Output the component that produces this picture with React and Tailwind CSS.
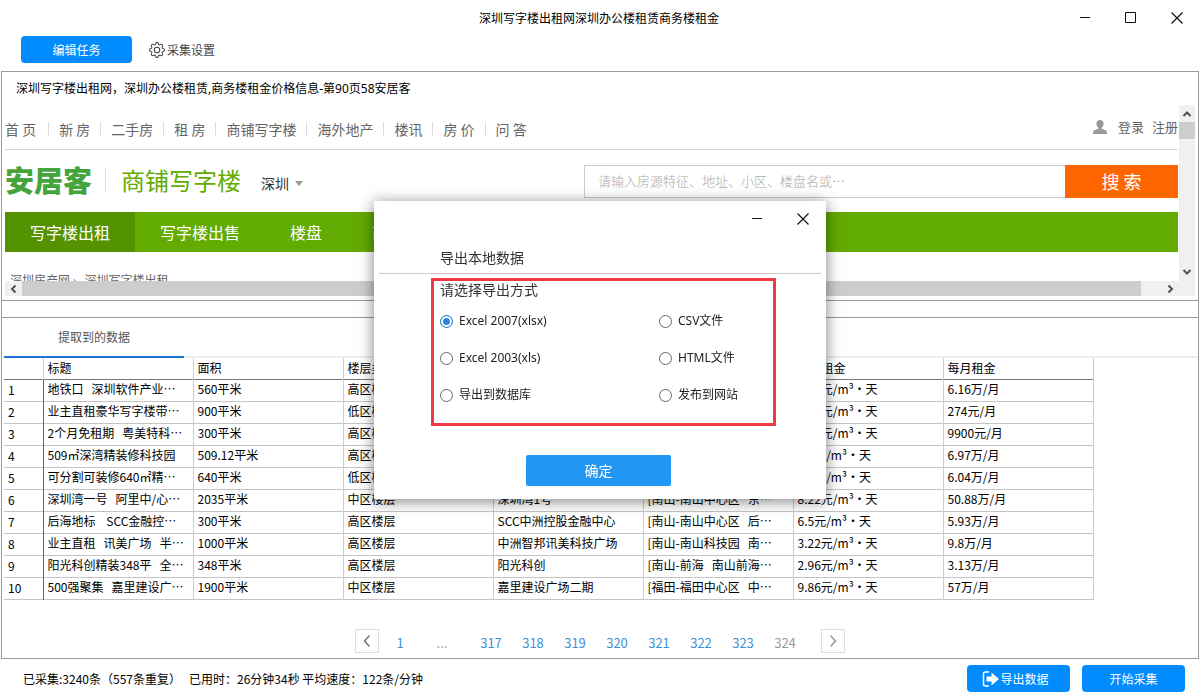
import { useState } from "react";
import { BsGear } from "react-icons/bs";

const siteLinks = ["首 页", "新 房", "二手房", "租 房", "商铺写字楼", "海外地产", "楼讯", "房 价", "问 答"];

const channels = ["写字楼出租", "写字楼出售", "楼盘", "商铺"];

const columns = ["标题", "面积", "楼层类型", "楼盘", "地址", "每日租金", "每月租金"];

const rows = [
  ["地铁口   深圳软件产业…", "560平米", "高区楼层", "", "", "6.12元/m³·天", "6.16万/月"],
  ["业主直租豪华写字楼带…", "900平米", "低区楼层", "", "", "5.25元/m³·天", "274元/月"],
  ["2个月免租期   粤美特科…", "300平米", "高区楼层", "", "", "6.33元/m³·天", "9900元/月"],
  ["509㎡深湾精装修科技园", "509.12平米", "高区楼层", "", "", "6.5元/m³·天", "6.97万/月"],
  ["可分割可装修640㎡精…", "640平米", "低区楼层", "", "", "6.2元/m³·天", "6.04万/月"],
  ["深圳湾一号   阿里中/心…", "2035平米", "中区楼层", "深圳湾1号", "[南山-南山中心区   东…", "8.22元/m³·天", "50.88万/月"],
  ["后海地标    SCC金融控…", "300平米", "高区楼层", "SCC中洲控股金融中心", "[南山-南山中心区   后…", "6.5元/m³·天", "5.93万/月"],
  ["业主直租   讯美广场   半…", "1000平米", "高区楼层", "中洲智邦讯美科技广场", "[南山-南山科技园   南…", "3.22元/m³·天", "9.8万/月"],
  ["阳光科创精装348平   全…", "348平米", "高区楼层", "阳光科创", "[南山-前海   南山前海…", "2.96元/m³·天", "3.13万/月"],
  ["500强聚集   嘉里建设广…", "1900平米", "中区楼层", "嘉里建设广场二期", "[福田-福田中心区   中…", "9.86元/m³·天", "57万/月"],
];

const pages = [317, 318, 319, 320, 321, 322, 323];

const formats = [
  { id: "xlsx", label: "Excel 2007(xlsx)" },
  { id: "csv", label: "CSV文件" },
  { id: "xls", label: "Excel 2003(xls)" },
  { id: "html", label: "HTML文件" },
  { id: "db", label: "导出到数据库" },
  { id: "site", label: "发布到网站" },
];

const MinimizeIcon = () => (
  <svg width="12" height="12" viewBox="0 0 12 12" stroke="#111" fill="none">
    <path d="M1 5.5h10" />
  </svg>
);

const MaximizeIcon = () => (
  <svg width="12" height="12" viewBox="0 0 12 12" stroke="#111" fill="none">
    <path d="M.5.5h10v10H.5z" />
  </svg>
);

const CloseIcon = () => (
  <svg width="12" height="12" viewBox="0 0 12 12" stroke="#111" strokeWidth="1.2" fill="none">
    <path d="M.5.5l11 11M11.5.5l-11 11" />
  </svg>
);

const Chevron = ({ d, color = "#505050", size = 10, stroke = 2 }) => (
  <svg width={size} height={size} viewBox="0 0 10 10" stroke={color} strokeWidth={stroke} fill="none">
    <path d={d} />
  </svg>
);

const TitleBar = () => (
  <header className="grid h-9 grid-cols-[1fr_auto_1fr] items-center pr-[17px] pl-[15px]">
    <span />
    <h1>深圳写字楼出租网深圳办公楼租赁商务楼租金</h1>
    <div className="flex justify-end gap-[34px]">
      <button type="button" aria-label="最小化"><MinimizeIcon /></button>
      <button type="button" aria-label="最大化"><MaximizeIcon /></button>
      <button type="button" aria-label="关闭"><CloseIcon /></button>
    </div>
  </header>
);

const SiteHeader = () => (
  <>
    <div className="flex h-[45px] items-center justify-between border-b border-[#d4d4d4] pt-1 text-sm text-[#666]">
      <nav className="flex">
        {siteLinks.map((link, i) => (
          <a
            key={link}
            href="#"
            className={i === 0 ? "pr-3 leading-[14px]" : "border-l border-[#ddd] px-2.5 leading-[14px]"}
          >
            {link}
          </a>
        ))}
      </nav>
      <div className="flex items-center gap-2 pb-1 text-[13px]">
        <svg width="16" height="14" viewBox="0 0 16 14" fill="#999" className="mr-0.5">
          <path d="M8 0c2.3 0 3.6 1.500 3.600 3.700 0 1.700-.8 3.200-1.900 3.900v1.200c1.800.8 5.300 1.400 5.300 3.300V14H1v-1.900c0-1.900 3.500-2.500 5.300-3.300V7.600C5.200 6.900 4.400 5.400 4.400 3.700 4.400 1.500 5.700 0 8 0z" />
        </svg>
        <a href="#">登录</a>
        <a href="#">注册</a>
      </div>
    </div>
    <div className="flex h-[62px] items-center">
      <span className="pb-1 text-[29px] leading-8 font-black text-[#45a53c]">安居客</span>
      <span className="ml-[13px] h-6 border-l border-[#ddd]" />
      <span className="ml-[15px] pb-0.5 text-2xl leading-8 text-[#62ab00]">商铺写字楼</span>
      <button type="button" className="ml-5 flex items-center gap-1.5 pt-1 text-sm text-[#333]">
        深圳
        <svg width="8" height="5" viewBox="0 0 8 5" fill="#999"><path d="M0 0h8L4 5z" /></svg>
      </button>
      <form className="ml-auto flex h-[33px] w-[594px]">
        <input
          type="text"
          aria-label="搜索房源"
          placeholder="请输入房源特征、地址、小区、楼盘名或…"
          className="min-w-0 flex-1 border border-r-0 border-[#ccc] px-[13px] text-[13px] font-light outline-none placeholder:text-[#aaa]"
        />
        <button type="button" className="w-[113px] bg-[#ff6600] text-lg text-white">搜 索</button>
      </form>
    </div>
    <nav className="flex h-10 bg-[#62ab00] text-base text-white">
      {channels.map((name, i) => (
        <a
          key={name}
          href="#"
          className={i === 0 ? "bg-[#549300] px-[25px] leading-10" : "px-[25px] leading-10"}
        >
          {name}
        </a>
      ))}
    </nav>
    <p className="px-[5px] pt-5 text-[#666]">深圳房产网 › &nbsp; 深圳写字楼出租</p>
  </>
);

const BrowserView = () => (
  <section className="border-b border-[#999] pr-[3px] pb-1 pl-[3px]">
    <p className="h-[33px] pl-[11px] font-['Noto_Sans','Noto_Sans_CJK_SC',sans-serif] leading-[34px]">
      深圳写字楼出租网，深圳办公楼租赁,商务楼租金价格信息-第90页58安居客
    </p>
    <div className="flex">
      <div className="h-44 min-w-0 flex-1 overflow-hidden pr-px">
        <SiteHeader />
      </div>
      <div className="flex w-4 flex-col items-center bg-[#f0f0f0]">
        <span className="flex h-[17px] items-center"><Chevron d="M1.500 7L5 3.500 8.500 7" /></span>
        <span className="h-[17px] w-full bg-[#cdcdcd]" />
        <span className="mt-auto flex h-[18px] items-center"><Chevron d="M1.500 3L5 6.500 8.500 3" /></span>
      </div>
    </div>
    <div className="flex h-[15px] items-center bg-[#f0f0f0] pr-5">
      <span className="flex w-[17px] justify-center"><Chevron d="M6.500 1.500L3 5l3.500 3.500" /></span>
      <span className="mr-6 h-full flex-1 bg-[#cdcdcd]" />
      <Chevron d="M3.500 1.500L7 5 3.500 8.500" />
    </div>
  </section>
);

const DataTable = () => (
  <table className="w-[1089px] table-fixed border-collapse text-left text-black">
    <colgroup>
      <col className="w-[39px]" />
      {columns.map((name) => <col key={name} className="w-[150px]" />)}
    </colgroup>
    <thead>
      <tr className="h-[21px] border-b border-[#777]">
        <th className="border-r border-[#ccc]" />
        {columns.map((name) => (
          <th key={name} className="border-r border-[#ccc] px-1 font-normal">{name}</th>
        ))}
      </tr>
    </thead>
    <tbody>
      {rows.map((row, i) => (
        <tr key={i} className="h-[22px] border-b border-[#c4c4c4]">
          <th className="border-r border-[#666] px-1 font-normal">{i + 1}</th>
          {row.map((cell, j) => (
            <td key={j} className="overflow-hidden border-r border-[#ccc] px-1 pb-0.5 whitespace-pre">{cell}</td>
          ))}
        </tr>
      ))}
    </tbody>
  </table>
);

const Pagination = () => (
  <nav className="mt-auto mr-0.5 mb-[5px] flex items-center justify-center text-[13px] text-[#3d8fd8]">
    <button type="button" aria-label="上一页" className="flex size-6 items-center justify-center border border-[#ddd]">
      <Chevron d="M7 0.500L3 5l4 4.500" color="#777" size={12} stroke={1.3} />
    </button>
    <a href="#" className="w-[42px] pt-1 text-center">1</a>
    <span className="mr-[7px] w-[42px] pt-1 text-center text-[#999]">...</span>
    {pages.map((page) => (
      <a key={page} href="#" className="w-[42px] pt-1 text-center">{page}</a>
    ))}
    <span className="mr-[15px] w-[42px] pt-1 text-center text-[#999]">324</span>
    <button type="button" aria-label="下一页" className="flex size-6 items-center justify-center border border-[#ddd]">
      <Chevron d="M3 0.500L7 5l-4 4.500" color="#999" size={12} stroke={1.3} />
    </button>
  </nav>
);

const ExportDialog = () => {
  const [format, setFormat] = useState("xlsx");

  return (
    <div className="fixed inset-0 flex items-center justify-center">
      <div
        role="dialog"
        aria-labelledby="export-title"
        className="flex w-[452px] flex-col bg-white px-[5px] pb-[13px] text-[#333] shadow-[0_2px_14px_rgba(0,0,0,0.5)]"
      >
        <div className="flex h-[35px] items-center justify-end gap-[34px] pr-3">
          <button type="button" aria-label="最小化"><MinimizeIcon /></button>
          <button type="button" aria-label="关闭"><CloseIcon /></button>
        </div>
        <h2 id="export-title" className="border-b border-[#ccc] pt-[11px] pb-1.5 pl-[61px] text-sm">
          导出本地数据
        </h2>
        <fieldset className="mt-1 mr-[45px] ml-[52px] h-[148px] border-3 border-[#ef3a43] px-1.5">
          <legend className="float-left w-full text-sm leading-4">请选择导出方式</legend>
          <div className="clear-both grid grid-cols-[219px_1fr] gap-y-[17px] pt-3.5">
            {formats.map(({ id, label }) => (
              <label
                key={id}
                className="flex h-5 items-center gap-1.5 font-['Noto_Sans','Noto_Sans_CJK_SC',sans-serif] text-[#222]"
              >
                <input
                  type="radio"
                  name="format"
                  checked={format === id}
                  onChange={() => setFormat(id)}
                  className="size-[13px] appearance-none rounded-full border border-[#666] checked:border-[#2a7fd0] checked:bg-[#2a86e0] checked:shadow-[inset_0_0_0_2px_#fff]"
                />
                {label}
              </label>
            ))}
          </div>
        </fieldset>
        <button type="button" className="mt-[29px] ml-[147px] h-[31px] w-[145px] rounded-xs bg-[#2196f3] pb-0.5 text-sm text-white">
          确定
        </button>
      </div>
    </div>
  );
};

const App = () => {
  return (
    <div className="flex min-h-screen flex-col bg-white font-['Noto_Sans_CJK_SC',sans-serif] text-xs text-black">
      <TitleBar />
      <div className="flex items-center gap-[17px] pb-2 pl-[21px] text-xs">
        <button type="button" className="h-[27px] w-[111px] rounded-sm bg-[#008cff] text-white">编辑任务</button>
        <button type="button" className="flex items-center gap-0.5 text-[#444]">
          <BsGear size={16} />
          采集设置
        </button>
      </div>
      <main className="mx-px flex flex-1 flex-col border border-[#999]">
        <BrowserView />
        <div className="h-[17px] border-b border-[#999]" />
        <section className="flex flex-1 flex-col pl-0.5">
          <div className="flex h-10 border-b-2 border-[#eee]">
            <button type="button" className="-mb-0.5 w-[180px] border-b-2 border-[#1a76d2] text-[#555]">
              提取到的数据
            </button>
          </div>
          <DataTable />
          <Pagination />
        </section>
      </main>
      <footer className="flex h-[41px] items-center gap-3 pr-[15px] pb-0.5 pl-[23px]">
        <p className="mr-auto whitespace-pre">已采集:3240条（557条重复）   已用时：26分钟34秒 平均速度：122条/分钟</p>
        <button type="button" className="flex h-[27px] w-[103px] items-center justify-center rounded-sm bg-[#008cff] pr-1.5 text-white">
          <svg width="18" height="16" viewBox="0 0 18 16" fill="none">
            <path d="M7 1H3.500Q1.500 1 1.500 3v10q0 2 2 2H7" stroke="#fff" strokeWidth="1.500" />
            <path d="M4.500 5.500h5V1.500L17 8l-7.500 6.500v-4h-5z" fill="#fff" />
          </svg>
          导出数据
        </button>
        <button type="button" className="h-[27px] w-[103px] rounded-sm bg-[#008cff] text-white">开始采集</button>
      </footer>
      <ExportDialog />
    </div>
  );
};

export default App;
